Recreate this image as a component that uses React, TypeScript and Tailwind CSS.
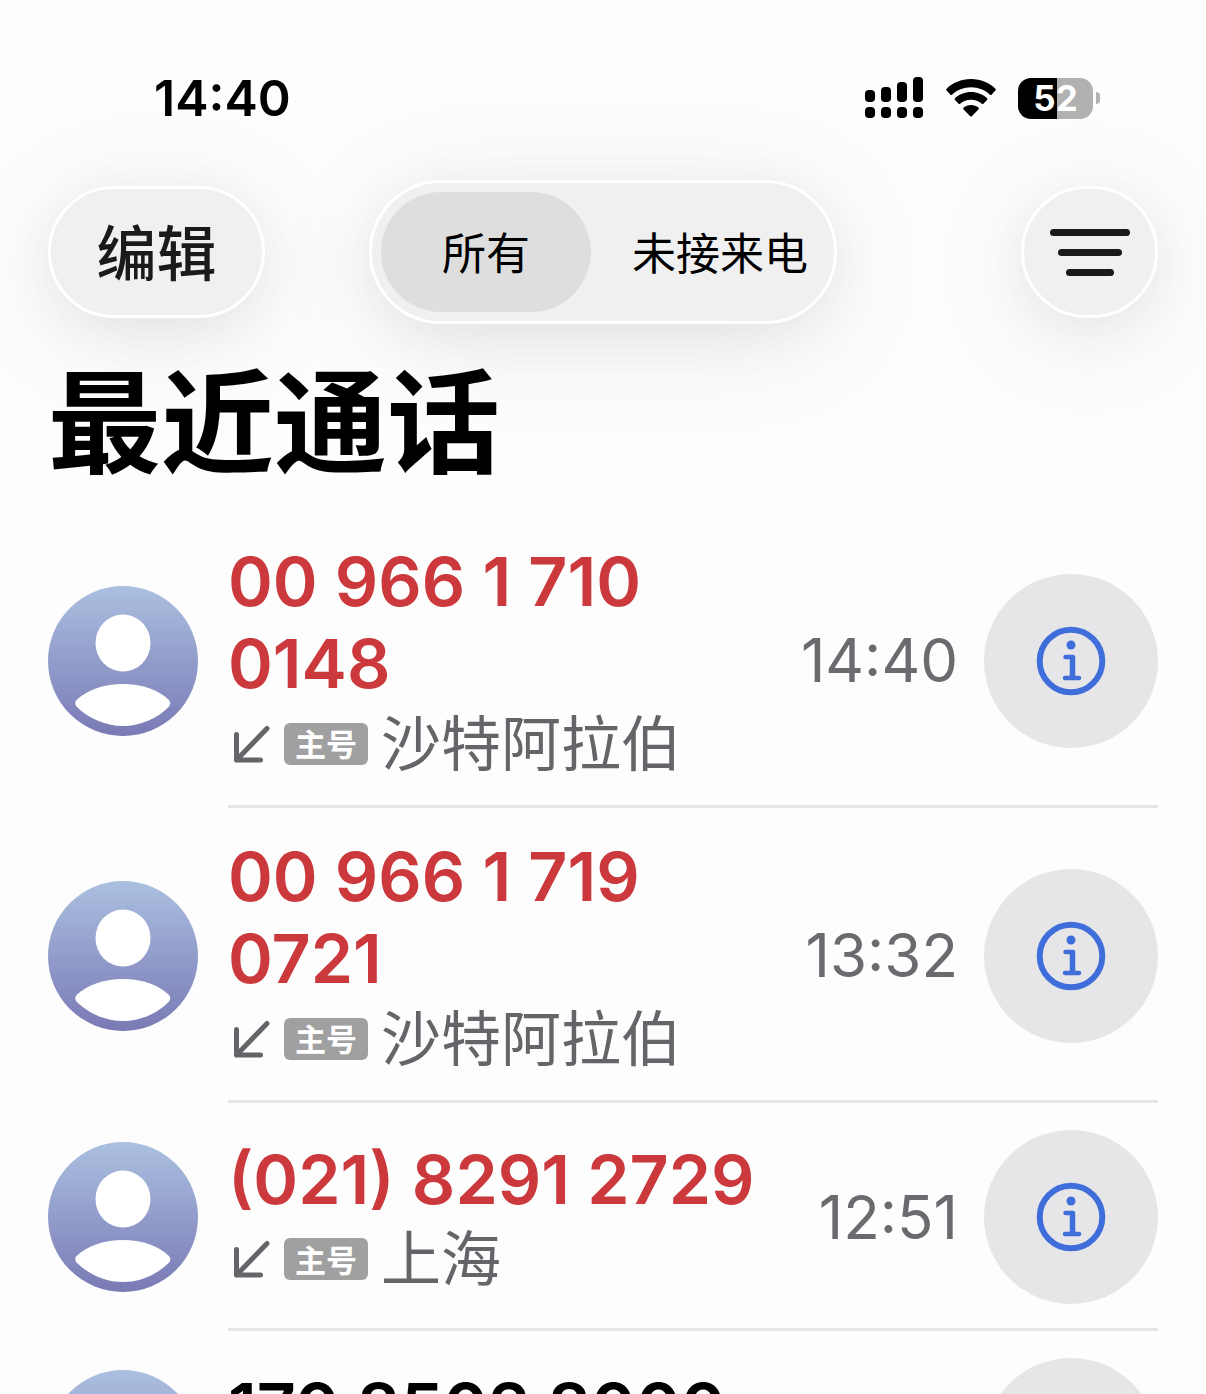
import { useState } from 'react'

interface Call {
  number: string
  place: string
  time: string
  missed: boolean
}

const calls: Call[] = [
  { number: '00 966 1 710 0148', place: '沙特阿拉伯', time: '14:40', missed: true },
  { number: '00 966 1 719 0721', place: '沙特阿拉伯', time: '13:32', missed: true },
  { number: '(021) 8291 2729', place: '上海', time: '12:51', missed: true },
  { number: '170 8502 8000', place: '上海', time: '12:20', missed: false },
]

function SignalIcon() {
  return (
    <svg width="59" height="42" viewBox="0 0 59 42" aria-hidden="true">
      <rect x="0" y="13" width="10" height="12" rx="4" />
      <rect x="16" y="10" width="10" height="15" rx="4" />
      <rect x="32" y="5" width="10" height="20" rx="4" />
      <rect x="48" y="0" width="10" height="25" rx="4" />
      {[0, 16, 32, 48].map((x) => (
        <rect key={x} x={x} y="30" width="10" height="11" rx="4" />
      ))}
    </svg>
  )
}

function WifiIcon() {
  return (
    <svg width="50" height="38" viewBox="0 0 50 38" aria-hidden="true">
      <path d="M25 0C34.8 0 43.6 3.9 49.4 9.7Q50.2 10.6 49.4 11.5L45.6 15.7Q44.8 16.4 44 15.7C39 11 32.4 8.2 25 8.2S11 11 6 15.7Q5.2 16.4 4.4 15.7L0.6 11.5Q-0.2 10.6 0.6 9.7C6.4 3.9 15.2 0 25 0Z" />
      <path d="M25 13C31.2 13 36.8 15.4 41 19.1Q41.7 20 41 20.9L37.4 24.7Q36.6 25.4 35.8 24.7C32.9 22.3 29.2 20.8 25 20.8S17.1 22.3 14.2 24.7Q13.4 25.4 12.6 24.7L9 20.9Q8.3 20 9 19.1C13.2 15.4 18.8 13 25 13Z" />
      <path d="M25 26C27.9 26 30.4 27 32.4 28.6Q33.2 29.5 32.4 30.4L26 37Q25 38 24 37L17.6 30.4Q16.8 29.5 17.6 28.6C19.6 27 22.1 26 25 26Z" />
    </svg>
  )
}

function Battery() {
  return (
    <div className="flex items-center gap-[3px]">
      <div className="flex h-[41px] w-[75px] items-center justify-center rounded-[13px] bg-linear-to-r from-black from-52% to-[#b1b1b1] to-52% text-[35px] leading-none font-bold text-white">
        52
      </div>
      <div className="h-3 w-1 rounded-r-full bg-[#b1b1b1]" />
    </div>
  )
}

function Avatar() {
  return (
    <div className="size-[150px] shrink-0 rounded-full bg-linear-to-b from-[#abc0e0] to-[#7a7ab5]">
      <svg viewBox="0 0 150 150" fill="white" aria-hidden="true">
        <ellipse cx="75" cy="57" rx="27.5" ry="28.5" />
        <path d="M28.5 114C40 103.5 57 98 75 98S110 103.5 121 114Q123.5 117 121 120.5C110 132 93 140 75 140S40 132 28.5 120.5Q26 117 28.5 114Z" />
      </svg>
    </div>
  )
}

function InfoIcon() {
  return (
    <svg width="70" height="70" viewBox="-35 -35 70 70" fill="none" stroke="#3f6edb" strokeLinecap="round" strokeLinejoin="round" aria-hidden="true">
      <circle r="31.3" strokeWidth="6" />
      <circle cy="-16" r="4.5" fill="#3f6edb" stroke="none" />
      <path d="M-5.5 -4H1.5" strokeWidth="4.5" />
      <path d="M1.5 -3.5V16" strokeWidth="5.5" />
      <path d="M-6 17H8" strokeWidth="4.5" />
    </svg>
  )
}

function CallRow({ call }: { call: Call }) {
  return (
    <li className="flex items-stretch gap-[30px] px-12">
      <div className="flex items-center py-[27px]">
        <Avatar />
      </div>
      <div className="flex min-w-0 flex-1 items-center gap-[26px] border-b-[3px] border-[#e5e5e6] pt-[27px] pb-6">
        <div className="min-w-0 flex-1">
          <div
            className={`text-[68px] leading-[82px] font-semibold ${call.missed ? 'text-[#cb393c]' : 'text-black'}`}
          >
            {call.number}
          </div>
          <div className="flex h-[77px] items-center pt-0.5 text-[#646469]">
            <svg width="44" height="44" viewBox="0 0 44 44" fill="none" stroke="currentColor" strokeWidth="5" strokeLinecap="round" strokeLinejoin="round" aria-label="来电">
              <path d="M39 6.5L8.5 38M8.5 12.5V38H32.5" />
            </svg>
            <span className="ml-3 flex h-[42px] w-[84px] items-center justify-center rounded-md bg-[#a0a0a0] pt-0.5 text-[31px] leading-none font-bold text-white">
              主号
            </span>
            <span className="ml-[13px] text-[60px] leading-[72px]">{call.place}</span>
          </div>
        </div>
        <time className="text-[60px] leading-[77px] text-[#6a6a6f]">{call.time}</time>
        <button
          type="button"
          aria-label={`${call.number} 详情`}
          className="flex size-[174px] shrink-0 items-center justify-center rounded-full bg-[#e6e6e8]"
        >
          <InfoIcon />
        </button>
      </div>
    </li>
  )
}

export default function App() {
  const [tab, setTab] = useState('all')

  return (
    <main className="h-screen overflow-hidden bg-[#fdfdfd] font-['Inter','Noto_Sans_CJK_SC',sans-serif] text-black">
      {/* Status bar */}
      <div className="flex items-center justify-between pt-[68px] pr-[106px] pl-[154px]">
        <div className="text-[50px] leading-[60px] font-semibold">14:40</div>
        <div className="flex items-center gap-[22px]">
          <SignalIcon />
          <WifiIcon />
          <Battery />
        </div>
      </div>

      {/* Toolbar */}
      <header className="grid grid-cols-[1fr_auto_1fr] items-center px-12 pt-[52px]">
        <button
          type="button"
          className="h-[132px] w-[217px] justify-self-start rounded-full border-[3px] border-white bg-[#f0f0f0] pt-1 text-[60px] leading-none font-medium text-[#1a1a1a] shadow-[0_12px_50px_rgba(0,0,0,0.06),0_16px_120px_rgba(0,0,0,0.08)]"
        >
          编辑
        </button>
        <div className="flex h-36 rounded-full border-[3px] border-white bg-[#f0f0f0] p-[9px] text-[44px] leading-none shadow-[0_12px_50px_rgba(0,0,0,0.06),0_16px_120px_rgba(0,0,0,0.08)]">
          <button
            type="button"
            aria-pressed={tab === 'all'}
            onClick={() => setTab('all')}
            className={`w-[210px] rounded-full pt-1 ${tab === 'all' ? 'bg-[#dedede]' : ''}`}
          >
            所有
          </button>
          <button
            type="button"
            aria-pressed={tab === 'missed'}
            onClick={() => setTab('missed')}
            className={`w-[234px] rounded-full pt-1 pl-6 ${tab === 'missed' ? 'bg-[#dedede]' : ''}`}
          >
            未接来电
          </button>
        </div>
        <button
          type="button"
          aria-label="筛选"
          className="flex h-[132px] w-[137px] flex-col items-center justify-center gap-[13px] justify-self-end rounded-full border-[3px] border-white bg-[#f0f0f0] shadow-[0_12px_50px_rgba(0,0,0,0.06),0_16px_120px_rgba(0,0,0,0.08)]"
        >
          <span className="h-[7px] w-20 rounded-full bg-[#1a1a1a]" />
          <span className="h-[7px] w-16 rounded-full bg-[#1a1a1a]" />
          <span className="h-[7px] w-12 rounded-full bg-[#1a1a1a]" />
        </button>
      </header>

      <h1 className="px-12 pt-9 text-[113px] leading-[126px] font-bold">最近通话</h1>

      <ul className="pt-[27px]">
        {calls.map((call) => (
          <CallRow key={call.number} call={call} />
        ))}
      </ul>
    </main>
  )
}
